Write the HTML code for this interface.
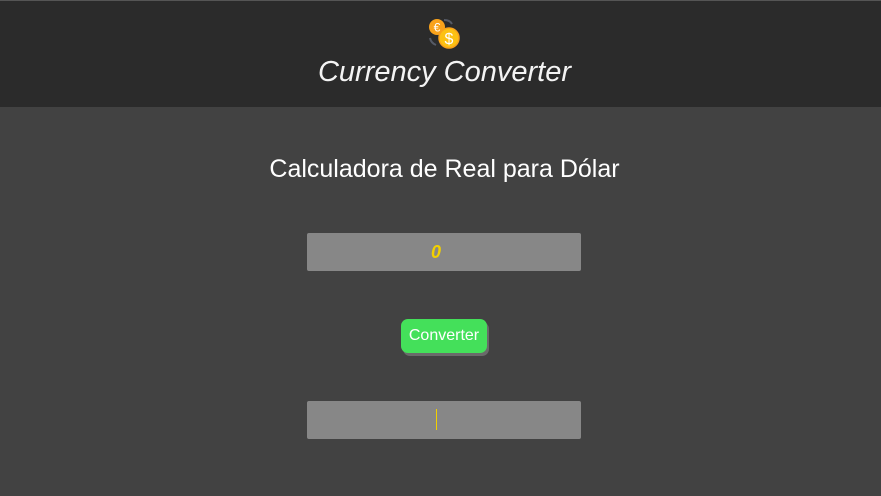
<!DOCTYPE html>
<html><head><style>
body{margin:0;width:881px;height:496px;background:#424242;font-family:"Liberation Sans",sans-serif;overflow:hidden;position:relative}
.hdr{position:absolute;left:0;top:0;width:881px;height:107px;background:#2b2b2b;border-top:1px solid #555;box-sizing:border-box}
.t{position:absolute;left:0;width:881px;text-align:center;top:55px;font-size:29px;font-style:italic;color:#f4f4f4;letter-spacing:0px;padding-left:8px;box-sizing:border-box}
h2{position:absolute;left:0;width:881px;text-align:center;top:155px;margin:0;font-size:25px;font-weight:normal;color:#fff;padding-left:8px;box-sizing:border-box}
.in{position:absolute;left:307px;width:274px;height:38px;background:#878787;border-radius:2px}
.btn{position:absolute;left:401px;top:319px;width:86px;height:34px;background:#44e05a;border-radius:7px;box-shadow:2px 3px 0 #6a6a6a;color:#fff;font-size:16px;text-align:center;line-height:33px}
</style></head><body>
<div class="hdr">
<svg style="position:absolute;left:426px;top:15px" width="36" height="36" viewBox="0 0 36 36">
<path d="M18 4 q6 0 8 4" stroke="#555a66" stroke-width="2" fill="none"/>
<path d="M4 22 q1 5 6 7" stroke="#555a66" stroke-width="2" fill="none"/>
<circle cx="11" cy="11" r="8" fill="#f9a21b"/>
<text x="11" y="15.5" font-size="12" fill="#fff" text-anchor="middle" font-family="Liberation Sans">€</text>
<circle cx="23" cy="22" r="10" fill="#fcc112" stroke="#f9a21b" stroke-width="1.5"/>
<text x="23" y="28" font-size="16" fill="#fff" text-anchor="middle" font-family="Liberation Sans">$</text>
</svg>
<div class="t">Currency Converter</div>
</div>
<h2>Calculadora de Real para Dólar</h2>
<div class="in" style="top:233px"><div style="position:absolute;left:124px;top:9px;color:#f2d000;font-style:italic;font-weight:bold;font-size:18px">0</div></div>
<div class="btn">Converter</div>
<div class="in" style="top:401px"><div style="position:absolute;left:129px;top:8px;width:1px;height:21px;background:#f2d000"></div></div>
</body></html>
